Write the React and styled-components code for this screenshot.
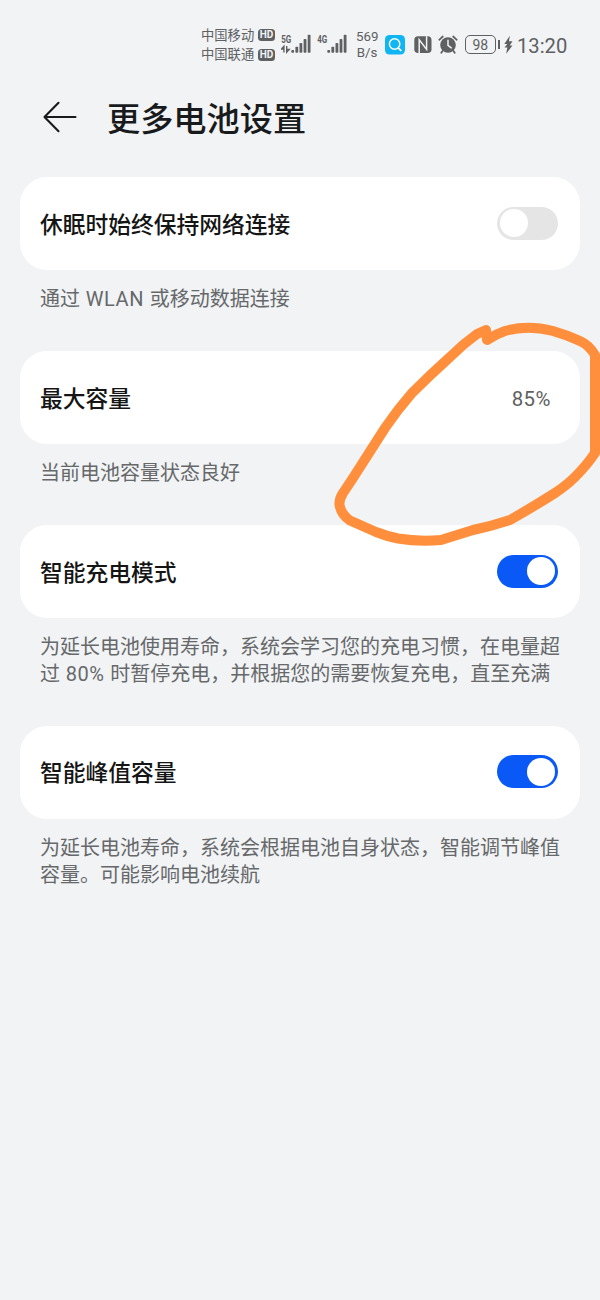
import { styled, createGlobalStyle } from "styled-components";

const GlobalStyle = createGlobalStyle`
    * {
        box-sizing: border-box;
    }
    body {
        margin: 0;
        background-color: #F1F3F5;
        font-family: Roboto, "Noto Sans CJK SC", sans-serif;
    }
`;
const Page = styled.div`
    position: relative;
    width: 600px;
    height: 1300px;
    overflow: hidden;
    background-color: #F1F3F5;
`;
const StatusBar = styled.div`
    display: flex;
    height: 90px;
    padding: 0 20px 0 201px;
    align-items: center;
    color: #5E6062;
    white-space: nowrap;
`;
const Carriers = styled.div`
    width: 80px;
    flex-shrink: 0;
`;
const Carrier = styled.div`
    display: flex;
    height: 19.5px;
    align-items: center;
    font-size: 13.3px;
    line-height: 19px;
`;
const HdBadge = styled.span`
    width: 16.5px;
    height: 12px;
    margin-left: 4px;
    border-radius: 3.5px;
    background-color: #5E6062;
    color: #F1F3F5;
    font-size: 10px;
    font-weight: bold;
    line-height: 12px;
    text-align: center;
`;
const Speed = styled.div`
    width: 22px;
    flex-shrink: 0;
    margin-left: 8px;
    font-size: 13.3px;
    line-height: 16px;
    text-align: center;
`;
const Icon = styled.svg`
    display: block;
    flex-shrink: 0;
    margin-left: ${(props) => props.$gap || 0}px;
`;
const Battery = styled.div`
    display: flex;
    width: 31.5px;
    height: 19px;
    flex-shrink: 0;
    margin: 0 0 1px 6.5px;
    border: 1.6px solid #5E6062;
    border-radius: 5px;
    align-items: center;
    justify-content: center;
    font-size: 14px;
    line-height: 16px;
`;
const BatteryTip = styled.span`
    width: 2px;
    height: 9px;
    flex-shrink: 0;
    margin: 0 0 1px 1.5px;
    background-color: #5E6062;
`;
const Clock = styled.span`
    margin: 1px 0 0 4px;
    font-size: 20.2px;
    line-height: 24px;
`;
const Header = styled.div`
    display: flex;
    height: 87px;
    padding: 4px 0 33px 43px;
    align-items: center;
`;
const Title = styled.h1`
    margin: 1px 0 0 30px;
    color: #191A1C;
    font-size: 33.2px;
    font-weight: 500;
    line-height: 50px;
`;
const Card = styled.div`
    display: flex;
    height: 93px;
    margin: 0 20px;
    padding: 0 22.5px 0 20px;
    border-radius: 27px;
    background-color: #FFFFFF;
    align-items: center;
    justify-content: space-between;
`;
const Label = styled.span`
    margin-top: 4px;
    color: #151515;
    font-size: 22.75px;
    font-weight: 500;
    line-height: 34px;
`;
const Value = styled.span`
    margin: 2px 6.5px 0 0;
    color: #606060;
    font-size: 20.4px;
    letter-spacing: 0.5px;
    line-height: 28px;
`;
const Track = styled.div`
    display: flex;
    width: 61px;
    height: 33px;
    padding: 0 3px;
    margin-bottom: 1px;
    border-radius: 17px;
    background-color: ${(props) => (props.$on ? "#0A59F7" : "#E5E5E5")};
    align-items: center;
    justify-content: ${(props) => (props.$on ? "flex-end" : "flex-start")};
`;
const Knob = styled.span`
    width: 28px;
    height: 28px;
    border-radius: 50%;
    background-color: #FFFFFF;
`;
const Description = styled.p`
    height: ${(props) => props.$height}px;
    margin: 0;
    padding: 16px 20px 0 40px;
    color: #66686A;
    font-size: 20px;
    line-height: 27.3px;
    white-space: pre-line;
    word-spacing: 0.7px;
`;
const Latin = styled.span`
    letter-spacing: 0.6px;
`;
const Marker = styled.svg`
    position: absolute;
    top: 0;
    left: 0;
    pointer-events: none;
`;
const SignalText = styled.text`
    font-family: "Roboto", sans-serif;
    font-size: 11.5px;
    font-weight: 700;
`;

const settings = [
    {
        label: "休眠时始终保持网络连接",
        on: false,
        description: <>通过 <Latin>WLAN</Latin> 或移动数据连接</>,
        height: 81,
    },
    {
        label: "最大容量",
        value: "85%",
        description: "当前电池容量状态良好",
        height: 81,
    },
    {
        label: "智能充电模式",
        on: true,
        description: <>为延长电池使用寿命，系统会学习您的充电习惯，在电量超{"\n"}过 <Latin>80%</Latin> 时暂停充电，并根据您的需要恢复充电，直至充满</>,
        height: 107.5,
    },
    {
        label: "智能峰值容量",
        on: true,
        description: "为延长电池寿命，系统会根据电池自身状态，智能调节峰值\n容量。可能影响电池续航",
        height: 108,
    },
];

function Signal(props) {
    return (
        <Icon width="31" height="30" viewBox="0 -4 31 30" fill="#5E6062" $gap={props.gap}>
            <SignalText x="0.2" y="8.9" textLength="10" lengthAdjust="spacingAndGlyphs">{props.type}</SignalText>
            {props.arrows && (
                <path d="M2.9 18.5v-6.2L0.4 15h2.5M5.7 12v6.2L8.2 15.5H5.7" fill="none" stroke="#5E6062" strokeWidth="1.4" />
            )}
            <rect x="10.3" y="16" width="2.8" height="2.8" rx="0.8" />
            <rect x="14.4" y="12.8" width="2.8" height="6" rx="0.8" />
            <rect x="18.5" y="9" width="2.8" height="9.8" rx="0.8" />
            <rect x="22.6" y="5" width="2.8" height="13.8" rx="0.8" />
            <rect x="26.7" y="0.8" width="2.8" height="18" rx="0.8" />
        </Icon>
    );
}

function Status() {
    return (
        <StatusBar>
            <Carriers>
                <Carrier>中国移动<HdBadge>HD</HdBadge></Carrier>
                <Carrier>中国联通<HdBadge>HD</HdBadge></Carrier>
            </Carriers>
            <Signal type="5G" arrows />
            <Signal type="4G" gap={5} />
            <Speed>569<br />B/s</Speed>
            <Icon width="20" height="20" viewBox="0 0 20 20" $gap={7}>
                <rect width="20" height="19.5" rx="4.5" fill="#10B5F3" />
                <circle cx="9.6" cy="9" r="5.2" fill="none" stroke="#FFFFFF" strokeWidth="1.5" />
                <path d="M13.2 12.8l2.6 2.6" stroke="#FFFFFF" strokeWidth="1.7" strokeLinecap="round" />
            </Icon>
            <Icon width="18" height="18" viewBox="0 0 18 18" $gap={8.5}>
                <rect x="0.3" y="0.3" width="17.2" height="16.7" rx="3.8" fill="#5E6062" />
                <path d="M5.2 17V3.8L12.6 13.4V0.3" fill="none" stroke="#F1F3F5" strokeWidth="1.5" />
            </Icon>
            <Icon width="20" height="20" viewBox="0 0 20 20" $gap={6.5}>
                <path d="M1.2 4.8L4.8 1.5M18.8 4.8l-3.6-3.3" stroke="#5E6062" strokeWidth="1.7" strokeLinecap="round" />
                <path d="M4.5 16l-1.2 1.7M15.5 16l1.2 1.7" stroke="#5E6062" strokeWidth="1.8" strokeLinecap="round" />
                <circle cx="10" cy="10" r="7.8" fill="#5E6062" />
                <path d="M10 5.3v5l3.2 2.6" fill="none" stroke="#F1F3F5" strokeWidth="1.5" strokeLinecap="round" />
            </Icon>
            <Battery>98</Battery>
            <BatteryTip />
            <Icon width="9" height="20" viewBox="0 0 9 20" $gap={4.5}>
                <path d="M5.8 0.8L0.3 9h3L0.5 12.5h2.8L2.2 18.8l6.2-8.3H5.7l2.8-4.2H5z" fill="#5E6062" />
            </Icon>
            <Clock>13:20</Clock>
        </StatusBar>
    );
}

function Switch(props) {
    return (
        <Track $on={props.on} role="switch" aria-checked={props.on}>
            <Knob />
        </Track>
    );
}

function Setting(props) {
    return (
        <>
            <Card>
                <Label>{props.label}</Label>
                {props.value ? <Value>{props.value}</Value> : <Switch on={props.on} />}
            </Card>
            <Description $height={props.height}>{props.description}</Description>
        </>
    );
}

function App() {
    return (
        <Page>
            <GlobalStyle />
            <Status />
            <Header>
                <Icon width="34" height="36" viewBox="0 0 34 36" fill="none" stroke="#191A1C" strokeWidth="2.1" strokeLinecap="round" strokeLinejoin="round">
                    <path d="M15.5 1.8L1.5 16L15.5 30.2M1.5 16H32.5" />
                </Icon>
                <Title>更多电池设置</Title>
            </Header>
            {settings.map((item) => (
                <Setting key={item.label} {...item} />
            ))}
            <Marker width="600" height="1300" viewBox="0 0 600 1300" fill="none">
                <path
                    d="M487 340Q496 334 505 331C519 327 537 327 553 331Q567 335 580 341Q589 345 595 355V453Q587 465 575 477Q567 485 555 493Q533 507 510 520Q492 526 473 530L441 540Q419 542 398 538.5Q386 536 376 532L350 520.5Q342 515 340 507Q338 501 343 493L353 478L385 428Q398 409 412 393Q430 375 450 357Q463 344 477 334L486 330Z"
                    stroke="#FF8F3C"
                    strokeWidth="10"
                    strokeLinejoin="round"
                />
            </Marker>
        </Page>
    );
}

export default App;
